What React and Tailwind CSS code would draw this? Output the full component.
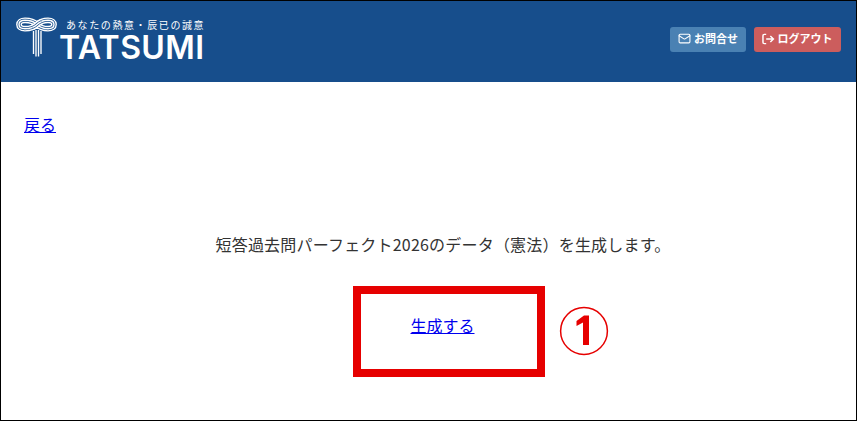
import React from "react";
import { Mail } from "lucide-react";

const EIGHT = "M21 7.5 C 17 3.5 13 3.3 9 3.3 C 5 3.3 3 5 3 7.5 C 3 10 5 11.7 9 11.7 C 13 11.7 17 11.5 21 7.5 C 25 3.5 28 3.3 32 3.3 C 36 3.3 38 5 38 7.5 C 38 10 36 11.7 32 11.7 C 28 11.7 25 11.5 21 7.5 Z";
const CROSS = "M16.5 10.4 C 18 9.8 19.5 9 21 7.5 C 22.5 6 24 5.2 25.5 4.6";

function Stack({ d }) {
  return (
    <>
      <path d={d} stroke="#fff" strokeWidth="5.8" />
      <path d={d} stroke="#174e8c" strokeWidth="3" />
      <path d={d} stroke="#fff" strokeWidth="1.4" />
    </>
  );
}

function LogoMark() {
  return (
    <svg width="41" height="41" viewBox="0 0 41 41" fill="none" className="block">
      <Stack d={EIGHT} />
      <Stack d={CROSS} />
      <path stroke="#fff" strokeWidth="1.35" d="M17.5 14 V37 M20 13 V39.5 M22.5 13 V39.5 M25 14 V37" />
    </svg>
  );
}

function LogoutIcon() {
  return (
    <svg width="13" height="12" viewBox="0 0 14 13" fill="none" stroke="#fff" strokeWidth="1.6" className="block">
      <path d="M4.5 1.5 H2.5 Q1 1.5 1 3 V10 Q1 11.5 2.5 11.5 H4.5" />
      <path d="M4.5 6.5 H12 M9 3.3 L12.3 6.5 L9 9.7" />
    </svg>
  );
}

function Circled() {
  return (
    <svg width="50" height="50" viewBox="0 0 50 50" className="block mt-[-1px]">
      <circle cx="25" cy="25" r="23.4" fill="none" stroke="#e60000" strokeWidth="1.5" />
      <path d="M17.5 15 L25 9.5 H30 V39 H24 V16.5 L17.5 20 Z" fill="#e60000" />
    </svg>
  );
}

export default function App() {
  return (
    <div className="w-[857px] h-[421px] border border-black bg-white flex flex-col overflow-hidden font-['Noto_Sans_CJK_JP','Liberation_Sans',sans-serif]">
      <header className="h-[81px] shrink-0 bg-[#174e8c] flex items-center justify-between pl-[15px] pr-[15px]">
        <div className="flex items-start mt-[-4px]">
          <LogoMark />
          <div className="flex flex-col ml-[2px] mt-[1px]">
            <span className="text-[10px] leading-[14px] tracking-[1.6px] text-white whitespace-nowrap pl-[7px]">あなたの熱意・辰已の誠意</span>
            <span className="font-['Inter',sans-serif] font-semibold text-[32px] leading-[28px] tracking-[0.4px] text-white pt-[2px]">TATSUMI</span>
          </div>
        </div>
        <div className="flex items-center gap-[8px] mt-[-5px]">
          <button className="h-[25px] w-[76px] rounded-[3px] bg-[#4a81b3] text-white text-[11px] font-bold flex items-center justify-center gap-[3px] leading-none pb-[1px]">
            <Mail size={13} strokeWidth={2} />
            <span>お問合せ</span>
          </button>
          <button className="h-[25px] w-[87px] rounded-[3px] bg-[#cc5d5d] text-white text-[11px] font-bold flex items-center justify-center gap-[3px] leading-none pr-[1px] pb-[1px]">
            <LogoutIcon />
            <span>ログアウト</span>
          </button>
        </div>
      </header>
      <main className="flex-1 flex flex-col px-[23px] text-[16px]">
        <div className="mt-[30px] leading-[24px]">
          <a href="#" className="text-[#0000ee] underline">戻る</a>
        </div>
        <p className="mt-[96px] leading-[24px] text-[#333] text-center ml-[29px] tracking-[0.2px]">短答過去問パーフェクト2026のデータ（憲法）を生成します。</p>
        <div className="mt-[30px] ml-[329px] flex items-center gap-[14px]">
          <div className="w-[192px] h-[91px] border-[8px] border-[#e60000] flex items-center justify-center pr-[13px] pb-[14px]">
            <a href="#" className="text-[#0000ee] underline leading-[24px]">生成する</a>
          </div>
          <Circled />
        </div>
      </main>
    </div>
  );
}
